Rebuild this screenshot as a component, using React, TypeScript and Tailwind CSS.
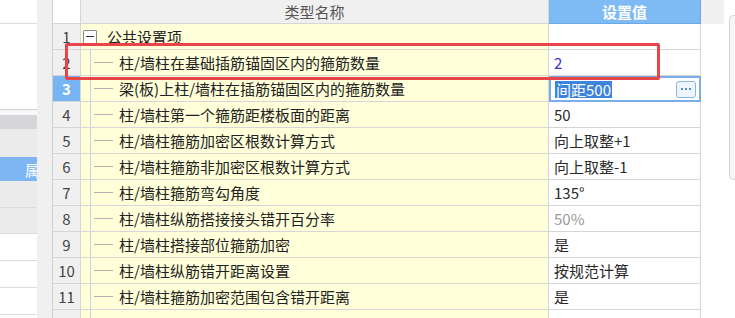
import React from "react";

type Row = {
  no: number;
  name: string;
  value?: string;
  kind?: "group" | "blue" | "edit" | "muted";
};

const rows: Row[] = [
  { no: 1, name: "公共设置项", kind: "group" },
  { no: 2, name: "柱/墙柱在基础插筋锚固区内的箍筋数量", value: "2", kind: "blue" },
  { no: 3, name: "梁(板)上柱/墙柱在插筋锚固区内的箍筋数量", value: "间距500", kind: "edit" },
  { no: 4, name: "柱/墙柱第一个箍筋距楼板面的距离", value: "50" },
  { no: 5, name: "柱/墙柱箍筋加密区根数计算方式", value: "向上取整+1" },
  { no: 6, name: "柱/墙柱箍筋非加密区根数计算方式", value: "向上取整-1" },
  { no: 7, name: "柱/墙柱箍筋弯勾角度", value: "135°" },
  { no: 8, name: "柱/墙柱纵筋搭接接头错开百分率", value: "50%", kind: "muted" },
  { no: 9, name: "柱/墙柱搭接部位箍筋加密", value: "是" },
  { no: 10, name: "柱/墙柱纵筋错开距离设置", value: "按规范计算" },
  { no: 11, name: "柱/墙柱箍筋加密范围包含错开距离", value: "是" },
];

function LeftPanel() {
  return (
    <div className="w-[37px] flex flex-col shrink-0 overflow-hidden">
      <div className="h-[24px] bg-white border-b border-[#dcdcdc]" />
      <div className="h-[86px] bg-white border-b border-[#cfcfcf]" />
      <div className="h-[5px] bg-[#f7f7f7]" />
      <div className="h-[14px] bg-[#d6d6da]" />
      <div className="h-[28px] bg-[#ebebeb]" />
      <div className="h-[24px] bg-[#7db6f2] flex items-center justify-end overflow-hidden">
        <span className="text-white text-[15px] leading-none mr-[-3px]">属</span>
      </div>
      <div className="h-[27px] bg-[#ebebeb] border-b border-[#dcdcdc]" />
      <div className="h-[26px] bg-[#ebebeb] border-b border-[#dcdcdc]" />
      <div className="h-[27px] bg-white border-b border-[#dcdcdc]" />
      <div className="h-[27px] bg-white border-b border-[#dcdcdc]" />
      <div className="h-[27px] bg-white border-b border-[#dcdcdc]" />
      <div className="flex-1 bg-white" />
    </div>
  );
}

function ValueCell({ row }: { row: Row }) {
  if (row.kind === "edit") {
    return (
      <div className="w-[152px] h-full border-2 border-[#79aee9] bg-white flex items-center pl-[4px] pr-[3px]">
        <span className="bg-[#3d84dc] text-white leading-[17px] px-[1px]">{row.value}</span>
        <div className="ml-auto w-[20px] h-[17px] rounded-[3px] border border-[#8ab6e6] bg-[#eef5fd] flex items-center justify-center gap-[2px]">
          <span className="w-[2px] h-[2px] bg-[#5b8fcc]" />
          <span className="w-[2px] h-[2px] bg-[#5b8fcc]" />
          <span className="w-[2px] h-[2px] bg-[#5b8fcc]" />
        </div>
      </div>
    );
  }
  const color =
    row.kind === "blue" ? "text-[#3535d6]" : row.kind === "muted" ? "text-[#9a9a9a]" : "text-[#2a2a2a]";
  return (
    <div className={`w-[152px] h-full bg-white border-b border-r border-[#d6d6d6] flex items-center pl-[5px] ${color}`}>
      {row.value}
    </div>
  );
}

function TreeCell({ row }: { row: Row }) {
  if (row.kind === "group") {
    return (
      <div className="w-[468px] h-full bg-[#ffffd9] border-b border-r border-[#d6d6d6] flex items-center">
        <div className="ml-[2px] w-[14px] h-[14px] border border-[#8a8a8a] bg-white rounded-[1px] flex items-center justify-center">
          <span className="w-[8px] h-px bg-[#333]" />
        </div>
        <span className="ml-[10px] text-[#222]">{row.name}</span>
      </div>
    );
  }
  return (
    <div className="w-[468px] h-full bg-[#ffffd9] border-b border-r border-[#d6d6d6] flex items-center">
      <div className="w-[10px] h-full border-r border-[#cfcfcf]" />
      <span className="ml-[3px] w-[19px] h-px bg-[#b0b0b0]" />
      <span className="ml-[6px] text-[#222] whitespace-nowrap">{row.name}</span>
    </div>
  );
}

function Grid() {
  return (
    <div className="w-[648px] shrink-0 flex flex-col">
      <div className="h-[24px] flex">
        <div className="w-[28px] h-full bg-white border-b border-r border-[#d6d6d6]" />
        <div className="w-[468px] h-full bg-[#f0f0f0] border-b border-r border-[#d6d6d6] flex items-center justify-center text-[#555]">
          类型名称
        </div>
        <div className="w-[152px] h-full bg-[#7ebaf4] border-b border-r border-[#6aa8e6] flex items-center justify-center text-white font-bold">
          设置值
        </div>
      </div>
      {rows.map((row) => (
        <div key={row.no} className="h-[26px] flex">
          <div
            className={`w-[28px] h-full border-b border-r border-[#d6d6d6] flex items-center justify-center ${
              row.no === 3 ? "bg-[#79b4f2] text-white font-bold" : "bg-[#f0f0f0] text-[#444]"
            }`}
          >
            {row.no}
          </div>
          <TreeCell row={row} />
          <ValueCell row={row} />
        </div>
      ))}
      <div className="flex-1 flex">
        <div className="w-[28px] bg-[#f0f0f0] border-r border-[#d6d6d6]" />
        <div className="w-[468px] bg-[#ffffd9] border-r border-[#d6d6d6] flex">
          <div className="w-[10px] border-r border-[#cfcfcf]" />
        </div>
        <div className="w-[152px] bg-white border-r border-[#d6d6d6]" />
      </div>
    </div>
  );
}

function RightArea() {
  return (
    <div className="flex-1 flex bg-white">
      <div className="w-[23px] h-[24px] bg-[#f0f0f0]" />
      <div className="ml-[5px] mt-[15px] w-[10px] h-[165px] rounded-l-[5px] border border-r-0 border-[#d4d4d4] bg-[#f6f6f6]" />
    </div>
  );
}

export default function App() {
  return (
    <div
      className="relative w-[735px] h-[318px] overflow-hidden flex bg-white text-[15px] leading-none"
      style={{ fontFamily: '"Noto Sans CJK SC", "Noto Sans", sans-serif' }}
    >
      <LeftPanel />
      <div className="w-[16px] shrink-0 bg-[#f0f0f0] border-r border-[#cfcfcf]" />
      <Grid />
      <RightArea />
      <div className="absolute left-[65px] top-[43px] w-[595px] h-[37px] border-[3px] border-[#e8444a] rounded-[2px]" />
    </div>
  );
}
